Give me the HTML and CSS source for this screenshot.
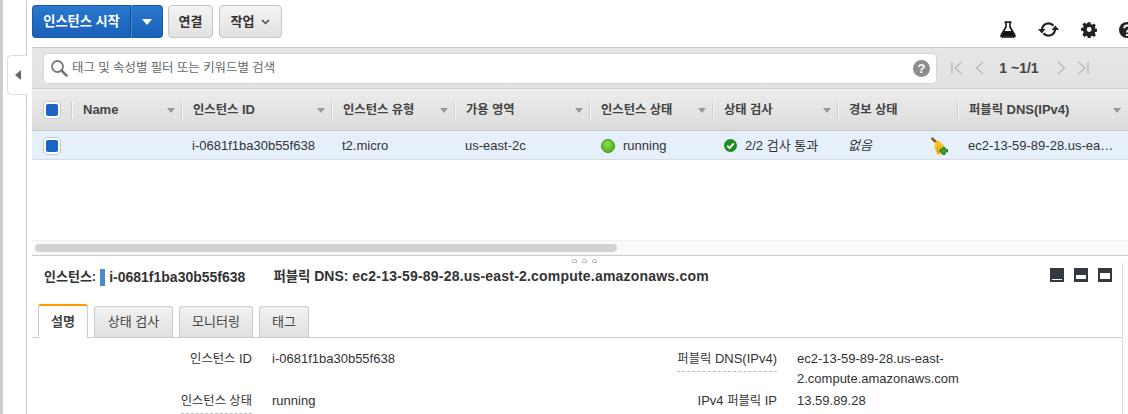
FILE: index.html
```html
<!DOCTYPE html>
<html lang="ko">
<head>
<meta charset="utf-8">
<title>EC2 인스턴스</title>
<link rel="stylesheet" href="styles.css">
</head>
<body>
<div class="app">
  <aside class="side">
    <div class="side-tab"><span class="side-arrow"></span></div>
  </aside>
  <main class="main">
    <div class="toolbar">
      <div class="btn-split">
        <button class="btn-primary btn-label">인스턴스 시작</button>
        <button class="btn-primary btn-drop"><span class="caret-white"></span></button>
      </div>
      <button class="btn btn-connect">연결</button>
      <button class="btn btn-action">작업
        <svg class="chev" width="9" height="6" viewBox="0 0 9 6"><path d="M1 1l3.500 3.500L8 1" fill="none" stroke="#444" stroke-width="1.500"/></svg>
      </button>
      <div class="tool-icons">
        <svg width="16" height="17" viewBox="0 0 16 17"><path d="M4.500 1h7M6 1v5L1.200 14.200Q.6 16 2.400 16h11.200q1.800 0 1.200-1.800L10 6V1" fill="none" stroke="#111" stroke-width="1.600"/><path d="M4.300 10h7.400l3 5.500H1.300z" fill="#111"/></svg>
        <svg width="21" height="17" viewBox="0 0 21 17"><path d="M4 8.500a6.500 6.500 0 0 1 11.500-3.800M17 8.500a6.500 6.500 0 0 1-11.500 3.800" fill="none" stroke="#222" stroke-width="2.200"/><path d="M0 8h7.500l-3.700 4.500zM13.500 9H21l-3.700-4.500z" fill="#222"/></svg>
        <svg width="16" height="16" viewBox="0 0 16 16"><path fill="#222" fill-rule="evenodd" d="M6.500 0h3l.4 2.200 1.400.6L13.200 1.500l2.100 2.100-1.300 1.900.6 1.400 2.200.4v3l-2.200.4-.6 1.400 1.300 1.900-2.100 2.100-1.900-1.300-1.400.6-.4 2.200h-3l-.4-2.200-1.400-.6-1.900 1.300-2.100-2.100L2 11l-.6-1.400L-.8 9.200v-3l2.200-.4L2 4.400.7 2.500 2.800.4l1.900 1.300 1.400-.6zM8 5.300a2.700 2.700 0 1 0 0 5.400 2.700 2.700 0 0 0 0-5.400z" transform="translate(.8 .2) scale(.92)"/></svg>
        <svg width="16" height="16" viewBox="0 0 16 16"><circle cx="8" cy="8" r="8" fill="#222"/><path d="M5.300 6.200a2.700 2.700 0 1 1 4 2.300c-.9.500-1.300 1-1.300 2" fill="none" stroke="#fff" stroke-width="2"/><circle cx="8" cy="13" r="1.200" fill="#fff"/></svg>
      </div>
    </div>

    <div class="filterbar">
      <div class="search">
        <svg width="18" height="18" viewBox="0 0 18 18"><circle cx="7.500" cy="7.500" r="5.500" fill="none" stroke="#777" stroke-width="1.800"/><path d="M11.500 11.500l5 5" stroke="#777" stroke-width="2.600" stroke-linecap="round"/></svg>
        <span class="search-text">태그 및 속성별 필터 또는 키워드별 검색</span>
        <span class="search-help">?</span>
      </div>
      <div class="pager">
        <svg width="12" height="14" viewBox="0 0 12 14"><path d="M1 1v12M10.500 1L4 7l6.500 6" fill="none" stroke="#bbb" stroke-width="1.400"/></svg>
        <svg class="pg-prev" width="9" height="14" viewBox="0 0 9 14"><path d="M8 1L1.500 7 8 13" fill="none" stroke="#bbb" stroke-width="1.400"/></svg>
        <span class="pg-text">1 ~1/1</span>
        <svg class="pg-next" width="9" height="14" viewBox="0 0 9 14"><path d="M1 1l6.500 6L1 13" fill="none" stroke="#bbb" stroke-width="1.400"/></svg>
        <svg class="pg-last" width="12" height="14" viewBox="0 0 12 14"><path d="M11 1v12M1.500 1L8 7l-6.500 6" fill="none" stroke="#bbb" stroke-width="1.400"/></svg>
      </div>
    </div>

    <div class="grid-row grid-head">
      <div class="cell cell-check"><span class="check"></span></div>
      <div class="cell">Name<i class="sort"></i></div>
      <div class="cell"><span><span class="ko">인스턴스</span> ID</span><i class="sort"></i></div>
      <div class="cell"><span class="ko">인스턴스 유형</span><i class="sort"></i></div>
      <div class="cell"><span class="ko">가용 영역</span><i class="sort"></i></div>
      <div class="cell"><span class="ko">인스턴스 상태</span><i class="sort"></i></div>
      <div class="cell"><span class="ko">상태 검사</span><i class="sort"></i></div>
      <div class="cell"><span class="ko">경보 상태</span></div>
      <div class="cell"><span><span class="ko">퍼블릭</span> DNS(IPv4)</span><i class="sort"></i></div>
    </div>
    <div class="grid-row grid-body">
      <div class="cell cell-check"><span class="check"></span></div>
      <div class="cell"></div>
      <div class="cell">i-0681f1ba30b55f638</div>
      <div class="cell">t2.micro</div>
      <div class="cell">us-east-2c</div>
      <div class="cell"><span class="dot-green"></span>running</div>
      <div class="cell">
        <svg class="ok-icon" width="13" height="13" viewBox="0 0 12 12"><circle cx="6" cy="6" r="6" fill="#1f8a1f"/><path d="M3 6.200l2.200 2.200L9 4" fill="none" stroke="#fff" stroke-width="1.800"/></svg>2/2 검사 통과
      </div>
      <div class="cell cell-alarm"><em class="none">없음</em>
        <svg class="broom" width="18" height="18" viewBox="0 0 18 18"><path d="M.5 1L6 6" stroke="#8a5a14" stroke-width="2.600"/><path d="M4 5.500L7.500 3.500 13 8.500 14.500 14 10 17.500H6.500L3.500 11z" fill="#f4c51c"/><path d="M6.500 10l.8 6.500M9.500 10l.7 6" stroke="#c4920e" stroke-width="1"/><path d="M11.500 10.500h2.500v2h2.500v2.500H14v2.500h-2.500V15H9v-2.500h2.500z" fill="#35b035" stroke="#0f5f0f" stroke-width=".8"/></svg>
      </div>
      <div class="cell">ec2-13-59-89-28.us-ea…</div>
    </div>
    <div class="grid-space"></div>
    <div class="hscroll"><div class="hthumb"></div></div>

    <section class="lower">
      <div class="lower-main">
        <div class="resizer"><i></i><i></i><i></i></div>
        <div class="titlebar">
          <span class="t-label">인스턴스:</span><span class="t-mark"></span><span class="t-id">i-0681f1ba30b55f638</span>
          <span class="t-dns"><span class="t-ko">퍼블릭</span> DNS: <span class="t-host">ec2-13-59-89-28.us-east-2.compute.amazonaws.com</span></span>
          <div class="panes">
            <span class="pane pane-a"></span><span class="pane pane-b"></span><span class="pane pane-c"></span>
          </div>
        </div>
        <div class="tabs">
          <div class="tab tab-on">설명</div>
          <div class="tab tab-check">상태 검사</div>
          <div class="tab tab-mon">모니터링</div>
          <div class="tab tab-tag">태그</div>
        </div>
        <div class="details">
          <div class="d-label"><span><span class="ko">인스턴스</span> ID</span></div>
          <div class="d-value">i-0681f1ba30b55f638</div>
          <div class="d-label"><span class="dashed"><span class="ko">퍼블릭</span> DNS(IPv4)</span></div>
          <div class="d-value">ec2-13-59-89-28.us-east-2.compute.amazonaws.com</div>
          <div class="d-label"><span class="dashed ko">인스턴스 상태</span></div>
          <div class="d-value">running</div>
          <div class="d-label"><span>IPv4 <span class="ko">퍼블릭</span> IP</span></div>
          <div class="d-value">13.59.89.28</div>
        </div>
      </div>
      <div class="vscroll"></div>
    </section>
  </main>
</div>
</body>
</html>
```

FILE: styles.css
```css
* { box-sizing: border-box; }
html, body { margin: 0; height: 100%; overflow: hidden; background: #fff; }
body { font: 13px/1.2 "Liberation Sans", "Noto Sans CJK KR", sans-serif; color: #333; }
.app { display: flex; height: 414px; }
.ko { font-size: 12.3px; }

.side { position: relative; width: 27px; flex: none; border-left: 3px solid #ccc; border-right: 1px solid #ccc; }
.side-tab { position: absolute; left: 4px; top: 55px; width: 20px; height: 40px; background: #fff; border: 1px solid #ddd; border-right: 0; border-radius: 5px 0 0 5px; display: flex; align-items: center; justify-content: center; }
.side-tab::after { content: ""; position: absolute; right: -1px; top: 0; bottom: 0; width: 1px; background: #fff; }
.side-arrow { border: 5.500px solid transparent; border-left: 0; border-right: 6px solid #666; }

.main { flex: 1; min-width: 0; margin-left: 5px; display: flex; flex-direction: column; }

.toolbar { height: 47px; flex: none; display: flex; align-items: flex-start; padding-top: 5px; position: relative; }
.btn-split { display: flex; height: 33px; width: 131px; }
.btn-primary { border: 1px solid #1a5aa8; background: linear-gradient(#2a78cf, #1a60b8); color: #fff; padding: 0; font: bold 13.200px/1 "Liberation Sans", "Noto Sans CJK KR", sans-serif; }
.btn-label { width: 99px; border-radius: 4px 0 0 4px; border-right-color: #14508f; }
.btn-drop { width: 32px; border-left: 1px solid #3f87d6; border-radius: 0 4px 4px 0; display: flex; align-items: center; justify-content: center; }
.caret-white { border: 5.500px solid transparent; border-bottom: 0; border-top: 6px solid #fff; }
.btn { height: 33px; border: 1px solid #c6c6c6; border-radius: 4px; background: linear-gradient(#f4f4f4, #e2e2e2); color: #333; font: bold 13px/1 "Liberation Sans", "Noto Sans CJK KR", sans-serif; padding: 0; display: flex; align-items: center; justify-content: center; gap: 7px; }
.btn-connect { width: 45px; margin-left: 5px; }
.btn-action { width: 63px; margin-left: 6px; }
.tool-icons { margin-left: auto; margin-right: -7px; margin-top: 16px; display: flex; align-items: center; gap: 22px; }

.filterbar { height: 42px; flex: none; display: flex; align-items: center; padding-left: 11px; background: linear-gradient(#e6e6e6, #e2e2e2); border-top: 1px solid #c8c8c8; border-bottom: 1px solid #ccc; }
.search { width: 894px; height: 31px; background: #fff; border: 1px solid #d6d6d6; border-radius: 4px; display: flex; align-items: center; padding: 0 6px; }
.search-text { margin-left: 4px; color: #666; font-size: 12.400px; flex: 1; }
.search-help { width: 17px; height: 17px; border-radius: 50%; background: #8d8d8d; color: #fff; font: bold 13px/17px "Liberation Sans", sans-serif; text-align: center; }
.pager { margin-left: 14px; display: flex; align-items: center; }
.pg-prev { margin-left: 12px; }
.pg-text { width: 70px; text-align: center; font-weight: bold; font-size: 14px; color: #444; }
.pg-next { margin-left: 3px; }
.pg-last { margin-left: 11px; }

.grid-row { display: grid; grid-template-columns: 40px 110px 150px 123px 135px 123px 125px 120px 170px; flex: none; }
.grid-head { height: 42px; border-top: 1px solid #f4f4f4; border-bottom: 1px solid #c8c8c8; background: linear-gradient(#ececec, #dcdcdc); font-weight: bold; color: #444; }
.grid-head .cell { position: relative; display: flex; align-items: center; padding-left: 11px; }
.grid-head .cell::before { content: ""; position: absolute; left: 0; top: 11px; bottom: 11px; width: 1px; background: #f7f7f7; box-shadow: -1px 0 0 #cfcfcf; }
.grid-head .cell-check::before { display: none; }
.sort { position: absolute; right: 7px; top: 18px; border: 4px solid transparent; border-bottom: 0; border-top: 5px solid #999; }
.grid-body { height: 29px; padding-top: 1px; background: #e6f0fb; border-bottom: 1px solid #d8dde3; color: #333; }
.grid-body .cell { display: flex; align-items: center; padding-left: 10px; min-width: 0; white-space: nowrap; }
.grid-body .cell-check, .grid-head .cell-check { padding-left: 11px; display: flex; align-items: center; }
.check { width: 18px; height: 18px; border-radius: 5px; border: 1px solid #c9c9c9; background: #fff; padding: 2px; display: block; }
.check::after { content: ""; display: block; width: 12px; height: 12px; border-radius: 2px; background: #1b66c0; }
.dot-green { width: 14px; height: 14px; border-radius: 50%; background: radial-gradient(circle at 45% 35%, #8fe04a, #3fa40f); border: 1px solid #3a9410; margin-right: 8px; margin-left: 1px; }
.ok-icon { margin: 0 8px 0 1px; }
.grid-body .cell-alarm { justify-content: space-between; padding-right: 9px; }
.none { font-style: italic; }
.broom { flex: none; }

.grid-space { height: 80px; flex: none; }
.hscroll { height: 16px; flex: none; background: #fafafa; border-top: 1px solid #eee; border-bottom: 1px solid #ccc; padding: 3px 3px 0; }
.hthumb { width: 582px; height: 8px; border-radius: 4px; background: #d2d2d2; }

.lower { flex: 1; min-height: 0; display: flex; position: relative; }
.lower-main { flex: 1; min-width: 0; position: relative; }
.resizer { position: absolute; left: 540px; top: 3px; display: flex; gap: 5px; }
.resizer i { width: 5px; height: 4px; border: 1px solid #bbb; border-radius: 2px 2px 0 0; display: block; }
.titlebar { height: 48px; display: flex; align-items: center; padding: 0 10px 6px 12px; font-weight: bold; color: #333; }
.t-label { font-size: 13px; }
.t-mark { width: 5px; height: 17px; background: #4a8ccb; margin: 0 4px; }
.t-id, .t-dns { font-size: 14px; }
.t-dns { margin-left: 28px; }
.t-ko { font-size: 13.400px; }
.t-host { letter-spacing: .2px; }
.panes { margin-left: auto; display: flex; gap: 10px; margin-top: -4px; }
.pane { width: 14px; height: 14px; display: block; background: #33393f; position: relative; }
.pane::after { content: ""; position: absolute; left: 2px; right: 2px; background: #fff; }
.pane-a::after { bottom: 2px; height: 1px; }
.pane-b::after { bottom: 3px; height: 4px; }
.pane-c::after { bottom: 3px; top: 5px; }

.tabs { height: 34px; display: flex; align-items: flex-end; padding-left: 6px; border-bottom: 1px solid #ccc; gap: 6px; }
.tab { height: 31px; display: flex; align-items: center; justify-content: center; background: linear-gradient(#f2f2f2, #e0e0e0); border: 1px solid #ccc; border-bottom: 0; border-radius: 3px 3px 0 0; color: #444; }
.tab-on { height: 34px; margin-bottom: -1px; width: 50px; background: #fff; font-weight: bold; border-top: 2px solid #f90; }
.tab-check { width: 79px; }
.tab-mon { width: 74px; }
.tab-tag { width: 50px; }
.details { display: grid; grid-template-columns: 220px 368px 117px 200px; column-gap: 20px; padding-top: 11px; color: #333; line-height: 20px; }
.d-label { text-align: right; }
.dashed { border-bottom: 1px dashed #bbb; padding-bottom: 2px; display: inline-block; }
.d-value { overflow-wrap: anywhere; }
.details > :nth-child(-n+4) { min-height: 42px; }
.vscroll { width: 6px; flex: none; margin-top: 7px; border-left: 1px solid #ddd; }
```
